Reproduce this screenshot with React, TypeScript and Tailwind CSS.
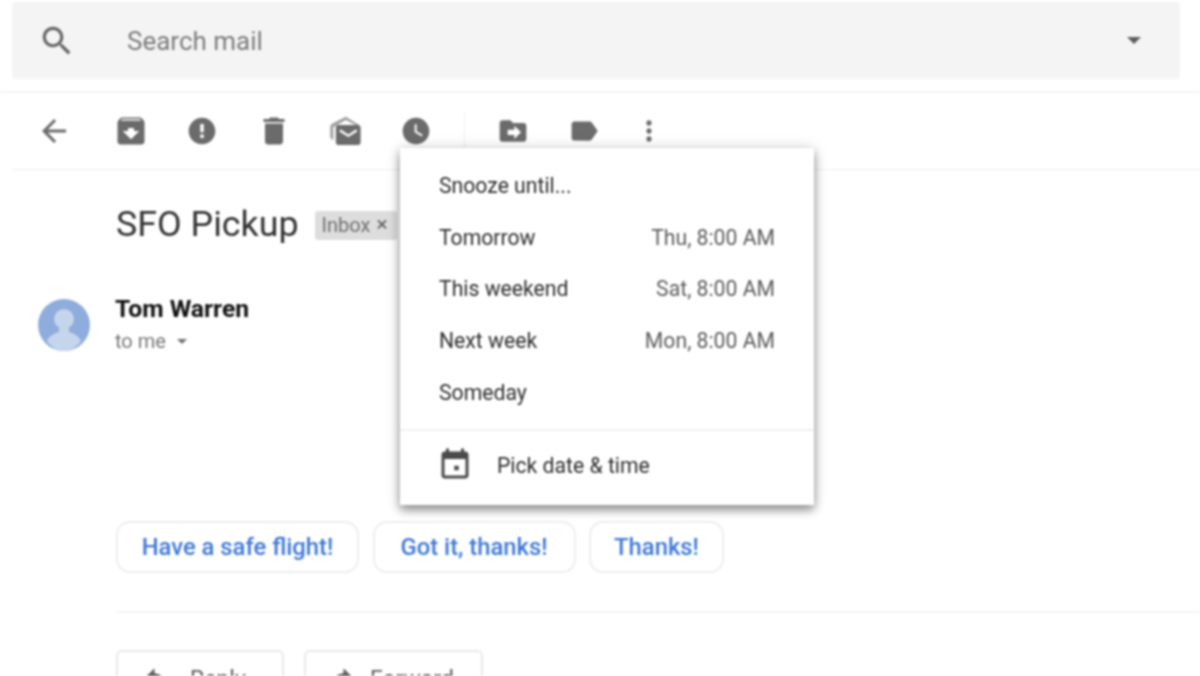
import type { ReactNode } from "react";

function Icon({ d, className = "w-9 h-9" }: { d: string; className?: string }) {
  return (
    <svg viewBox="0 0 24 24" className={`${className} shrink-0 fill-current`}>
      <path d={d} />
    </svg>
  );
}

const icons = {
  search:
    "M15.5 14h-.79l-.28-.27C15.41 12.59 16 11.11 16 9.5 16 5.91 13.09 3 9.5 3S3 5.91 3 9.5 5.91 16 9.5 16c1.61 0 3.09-.59 4.23-1.57l.27.28v.79l5 4.99L20.49 19l-4.99-5zm-6 0C7.01 14 5 11.99 5 9.5S7.01 5 9.5 5 14 7.01 14 9.5 11.99 14 9.5 14z",
  back: "M20 11H7.83l5.59-5.59L12 4l-8 8 8 8 1.41-1.41L7.83 13H20v-2z",
  archive:
    "M20.54 5.23l-1.39-1.68C18.88 3.21 18.47 3 18 3H6c-.47 0-.88.21-1.16.55L3.46 5.23C3.17 5.57 3 6.02 3 6.5V19c0 1.1.9 2 2 2h14c1.1 0 2-.9 2-2V6.5c0-.48-.17-.93-.46-1.27zM12 17.5L6.5 12H10v-2h4v2h3.5L12 17.5zM5.12 5l.81-1h12l.94 1H5.12z",
  report:
    "M12 2C6.48 2 2 6.48 2 12s4.48 10 10 10 10-4.48 10-10S17.52 2 12 2zm1.3 15.3h-2.6v-2.6h2.6v2.6zm0-4.3h-2.6V6.7h2.6V13z",
  trash: "M6 19c0 1.1.9 2 2 2h8c1.1 0 2-.9 2-2V7H6v12zM19 4h-3.5l-1-1h-5l-1 1H5v2h14V4z",
  clock:
    "M12 2C6.5 2 2 6.5 2 12s4.5 10 10 10 10-4.5 10-10S17.5 2 12 2zm4.2 14.2L11 13V7h1.5v5.2l4.5 2.7-.8 1.3z",
  move: "M20 6h-8l-2-2H4c-1.1 0-1.99.9-1.99 2L2 18c0 1.1.9 2 2 2h16c1.1 0 2-.9 2-2V8c0-1.1-.9-2-2-2zm-7 12v-3H8v-4h5V8l5 5-5 5z",
  label:
    "M17.63 5.84C17.27 5.33 16.67 5 16 5L5 5.01C3.9 5.01 3 5.9 3 7v10c0 1.1.9 1.99 2 1.99L16 19c.67 0 1.27-.33 1.63-.84L22 12l-4.37-6.16z",
  more: "M12 8c1.1 0 2-.9 2-2s-.9-2-2-2-2 .9-2 2 .9 2 2 2zm0 2c-1.1 0-2 .9-2 2s.9 2 2 2 2-.9 2-2-.9-2-2-2zm0 6c-1.1 0-2 .9-2 2s.9 2 2 2 2-.9 2-2-.9-2-2-2z",
  event:
    "M14.500 12.500h-3v3h3v-3zM16 1v2H8V1H6v2H5c-1.11 0-1.99.9-1.99 2L3 19c0 1.1.89 2 2 2h14c1.1 0 2-.9 2-2V5c0-1.1-.9-2-2-2h-1V1h-2zm3 18H5V8h14v11z",
  reply: "M10 9V5l-7 7 7 7v-4.1c5 0 8.5 1.6 11 5.1-1-5-4-10-11-11z",
  forward: "M14 9V5l7 7-7 7v-4.1c-5 0-8.5 1.6-11 5.1 1-5 4-10 11-11z",
};

// open envelope behind a closed one, there is no stock icon for it
function MarkUnread() {
  return (
    <svg viewBox="0 0 24 24" className="h-9 w-9 shrink-0 fill-current">
      <path
        opacity="0.65"
        d="M12.500 2.500L4 6.800C3.400 7.100 2.200 8 2.200 9.200V15.500C2.200 16.800 3 17.600 4.200 18V9.500L12.500 4.600L19 8H21.500L12.500 2.500z"
      />
      <path
        fillRule="evenodd"
        d="M7.500 8h13.300c.9 0 1.600.7 1.600 1.600v10.100c0 .9-.7 1.600-1.600 1.600H7.500c-.9 0-1.600-.7-1.600-1.600V9.600C5.900 8.700 6.600 8 7.500 8zm6.700 6.300L9 10.800 8.200 12.300l6 3.700 6-3.700-.8-1.500-5.200 3.500z"
      />
    </svg>
  );
}

function SnoozeRow({ label, time }: { label: string; time?: string }) {
  return (
    <div className="flex h-[51.7px] items-center justify-between px-[39px]">
      <span className="text-[#2e2e2e]">{label}</span>
      {time && <span className="text-[#5c5c5c]">{time}</span>}
    </div>
  );
}

function SmartReply({ children, className }: { children: ReactNode; className: string }) {
  return (
    <button
      className={`${className} h-[52px] rounded-[14px] border-2 border-[#eeeeee] pt-[2px] text-center text-[23.8px] font-medium text-[#3f78d8]`}
    >
      {children}
    </button>
  );
}

export default function App() {
  return (
    <div className="relative h-[676px] w-[1200px] overflow-hidden bg-white font-['Roboto',sans-serif] blur-[0.8px]">
      <div className="ml-[12px] mt-[2px] flex h-[77px] w-[1168px] items-center rounded-[4px] bg-[#f4f4f4] pl-[26px] pr-[39px] text-[#666666]">
        <Icon d={icons.search} className="h-[38px] w-[38px]" />
        <span className="ml-[51px] flex-1 pt-[2px] text-[26px] text-[#7c7c7c]">Search mail</span>
        <div className="h-0 w-0 border-x-[7px] border-t-[7px] border-x-transparent border-t-[#5c5c5c]" />
      </div>

      <div className="mt-[12px] border-t-2 border-[#f5f5f5]">
        <div className="ml-[12px] flex h-[77px] items-center border-b border-[#eeeeee] pl-[24px] text-[#6b6b6b]">
          <Icon d={icons.back} />
          <div className="ml-[41px] flex items-center gap-[35.25px]">
            <Icon d={icons.archive} />
            <Icon d={icons.report} className="h-9 w-9 p-[2px]" />
            <Icon d={icons.trash} />
            <MarkUnread />
            <Icon d={icons.clock} className="h-9 w-9 p-[2px]" />
          </div>
          <div className="ml-[30px] h-[36px] w-px bg-[#eeeeee]" />
          <div className="ml-[30px] flex items-center">
            <Icon d={icons.move} className="h-9 w-9 p-[2px]" />
            <div className="ml-[35px]">
              <Icon d={icons.label} className="h-9 w-9 p-[1.5px]" />
            </div>
            <div className="ml-[29px]">
              <Icon d={icons.more} className="h-9 w-9 p-[2px]" />
            </div>
          </div>
        </div>
      </div>

      <div className="pl-[116px]">
        <div className="mt-[33px] flex h-[44px] items-center">
          <h1 className="text-[35.8px] font-normal text-[#333333]">SFO Pickup</h1>
          <div className="ml-[16px] flex h-[29px] w-[82px] items-center gap-[6px] rounded-[3px] bg-[#dddddd] pl-[7px] text-[20px] text-[#6f6f6f]">
            Inbox <span className="text-[21px] text-[#5c5c5c]">×</span>
          </div>
        </div>

        <div className="mt-[52px] flex">
          <div className="-ml-[78px] mr-[25px] h-[52px] w-[52px] shrink-0">
            <svg viewBox="0 0 52 52" className="h-[52px] w-[52px]">
              <circle cx="26" cy="26" r="26" fill="#8eaddc" />
              <circle cx="26" cy="20" r="10" fill="#c5d5ec" />
              <path d="M21 27h10v6c5 1.5 10 4 12 9-4 6-10.500 10-17 10S13 48 9 42c2-5 7-7.500 12-9z" fill="#c5d5ec" />
            </svg>
          </div>
          <div className="-mt-[4px]">
            <div className="text-[24.7px] font-bold leading-[27px] text-[#111111]">Tom Warren</div>
            <div className="mt-[7px] flex items-center text-[20px] leading-[24px] text-[#777777]">
              to me
              <div className="ml-[11px] h-0 w-0 border-x-[5px] border-t-[5px] border-x-transparent border-t-[#707070]" />
            </div>
          </div>
        </div>

        <div className="mt-[168px] flex gap-[13.500px]">
          <SmartReply className="w-[243px]">Have a safe flight!</SmartReply>
          <SmartReply className="w-[203px]">Got it, thanks!</SmartReply>
          <SmartReply className="w-[135px]">Thanks!</SmartReply>
        </div>

        <div className="mt-[38px] border-t-2 border-[#f5f5f5]" />

        <div className="mt-[37px] flex gap-[20px]">
          <button className="flex h-[60px] w-[168px] items-center rounded-[6px] border-2 border-[#e8e8e8] pl-[24px] text-[23px] text-[#5c5c5c]">
            <Icon d={icons.reply} className="-mt-[6px] h-[30px] w-[30px]" />
            <span className="ml-[18px]">Reply</span>
          </button>
          <button className="flex h-[60px] w-[179px] items-center rounded-[6px] border-2 border-[#e8e8e8] pl-[20px] text-[23px] text-[#5c5c5c]">
            <Icon d={icons.forward} className="-mt-[6px] h-[30px] w-[30px]" />
            <span className="ml-[14px]">Forward</span>
          </button>
        </div>
      </div>

      <div className="absolute left-[400px] top-[148px] h-[357px] w-[414px] bg-white pt-[12px] text-[21.2px] shadow-[0_5px_9px_rgba(0,0,0,0.4),0_0_14px_rgba(0,0,0,0.14)]">
        <SnoozeRow label="Snooze until..." />
        <SnoozeRow label="Tomorrow" time="Thu, 8:00 AM" />
        <SnoozeRow label="This weekend" time="Sat, 8:00 AM" />
        <SnoozeRow label="Next week" time="Mon, 8:00 AM" />
        <SnoozeRow label="Someday" />
        <div className="mt-[11px] border-t-2 border-[#f0f0f0]" />
        <div className="-mt-px flex h-[70px] items-center pl-[37px] text-[#2e2e2e]">
          <Icon d={icons.event} className="h-[36px] w-[36px] text-[#4a4a4a]" />
          <span className="ml-[24px]">Pick date &amp; time</span>
        </div>
      </div>
    </div>
  );
}
